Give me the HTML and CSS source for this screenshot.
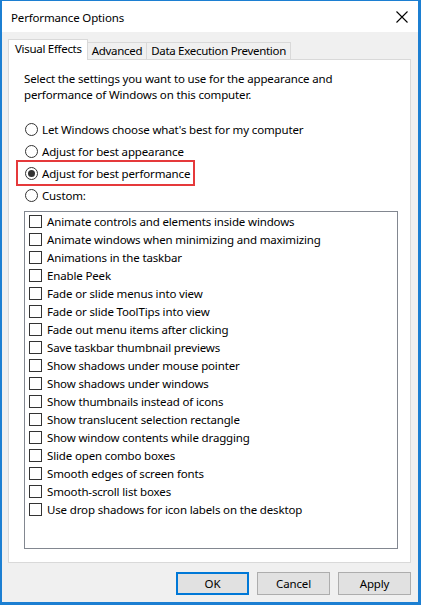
FILE: index.html
```html
<!DOCTYPE html>
<html lang="en">
<head>
<meta charset="UTF-8" />
<title>Performance Options</title>
<link rel="stylesheet" href="styles.css">
</head>
<body>

<div class="window">
  <div class="titlebar">
    <span class="title">Performance Options</span>
    <svg class="close" width="12" height="12" viewBox="0 0 12 12">
      <path d="M0.5 0.5 L11.5 11.5 M11.5 0.5 L0.5 11.5" stroke="#000" stroke-width="1.1" fill="none"/>
    </svg>
  </div>

  <div class="content">
    <div class="tabs">
      <div class="tab active">Visual Effects</div>
      <div class="tab">Advanced</div>
      <div class="tab">Data Execution Prevention</div>
    </div>

    <div class="panel">
      <p class="intro">Select the settings you want to use for the appearance and<br>performance of Windows on this computer.</p>

      <div class="options">
        <div class="radio-row"><span class="radio"></span>Let Windows choose what's best for my computer</div>
        <div class="radio-row"><span class="radio"></span>Adjust for best appearance</div>
        <div class="radio-row marked"><span class="radio checked"></span>Adjust for best performance</div>
        <div class="radio-row"><span class="radio"></span>Custom:</div>
      </div>

      <ul class="effects">
        <li><span class="check"></span>Animate controls and elements inside windows</li>
        <li><span class="check"></span>Animate windows when minimizing and maximizing</li>
        <li><span class="check"></span>Animations in the taskbar</li>
        <li><span class="check"></span>Enable Peek</li>
        <li><span class="check"></span>Fade or slide menus into view</li>
        <li><span class="check"></span>Fade or slide ToolTips into view</li>
        <li><span class="check"></span>Fade out menu items after clicking</li>
        <li><span class="check"></span>Save taskbar thumbnail previews</li>
        <li><span class="check"></span>Show shadows under mouse pointer</li>
        <li><span class="check"></span>Show shadows under windows</li>
        <li><span class="check"></span>Show thumbnails instead of icons</li>
        <li><span class="check"></span>Show translucent selection rectangle</li>
        <li><span class="check"></span>Show window contents while dragging</li>
        <li><span class="check"></span>Slide open combo boxes</li>
        <li><span class="check"></span>Smooth edges of screen fonts</li>
        <li><span class="check"></span>Smooth-scroll list boxes</li>
        <li><span class="check"></span>Use drop shadows for icon labels on the desktop</li>
      </ul>
    </div>

    <div class="buttons">
      <button class="btn default">OK</button>
      <button class="btn">Cancel</button>
      <button class="btn">Apply</button>
    </div>
  </div>
</div>

</body>
</html>
```

FILE: styles.css
```css
* { box-sizing: border-box; }
body {
  margin: 0;
  font-family: "Noto Sans", sans-serif;
  font-size: 11.5px;
  letter-spacing: -0.15px;
  color: #000;
}
.window {
  width: 421px;
  height: 605px;
  border-style: solid;
  border-color: #1c7fd2;
  border-width: 1px 3px 3px 2px;
  display: flex;
  flex-direction: column;
  background: #f0f0f0;
}
.titlebar {
  height: 31px;
  background: #fff;
  display: flex;
  align-items: center;
  padding: 1px 9px 0 9px;
}
.title { flex: 1; }
.close { margin-right: 1px; }

.content {
  flex: 1;
  padding: 7px 7px 6px 6px;
  display: flex;
  flex-direction: column;
}
.tabs {
  display: flex;
  align-items: flex-end;
  height: 20px;
  position: relative;
  z-index: 1;
}
.tab {
  height: 17px;
  line-height: 16px;
  padding: 0 4px;
  letter-spacing: -0.3px;
  border: 1px solid #d9d9d9;
  border-bottom: none;
  border-left: none;
  background: #f0f0f0;
  white-space: nowrap;
}
.tab.active {
  height: 21px;
  line-height: 18px;
  margin-bottom: -1px;
  background: #fff;
  border-left: 1px solid #d9d9d9;
  padding: 0 5px 0 6px;
}

.panel {
  height: 504px;
  background: #fff;
  border: 1px solid #d9d9d9;
  padding: 11px 12px 0 15px;
}
.intro {
  margin: 0;
  line-height: 16px;
}
.options {
  margin-top: 15px;
}
.radio-row {
  display: flex;
  align-items: center;
  height: 22px;
  gap: 4px;
  padding-left: 1px;
  width: max-content;
}
.radio-row.marked {
  outline: 2px solid #e5393b;
  outline-offset: 0;
  margin-left: -6px;
  padding: 0 3px 0 7px;
}
.radio {
  width: 13px;
  height: 13px;
  border: 1px solid #333;
  border-radius: 50%;
  background: #fff;
  display: flex;
  align-items: center;
  justify-content: center;
}
.radio.checked::after {
  content: "";
  width: 7px;
  height: 7px;
  border-radius: 50%;
  background: #333;
}

.effects {
  list-style: none;
  margin: 5px 0 0 0;
  padding: 0 0 0 4px;
  height: 338px;
  border: 1px solid #828790;
}
.effects li {
  height: 18px;
  display: flex;
  align-items: center;
  gap: 5px;
  white-space: nowrap;
}
.check {
  width: 13px;
  height: 13px;
  border: 1px solid #333;
  background: #fff;
}

.buttons {
  display: flex;
  justify-content: flex-end;
  gap: 8px;
  margin-top: 9px;
}
.btn {
  width: 73px;
  height: 23px;
  font: inherit;
  letter-spacing: inherit;
  background: #e1e1e1;
  border: 1px solid #adadad;
  padding: 0;
  color: #000;
}
.btn.default {
  border: 2px solid #0078d7;
}
```
